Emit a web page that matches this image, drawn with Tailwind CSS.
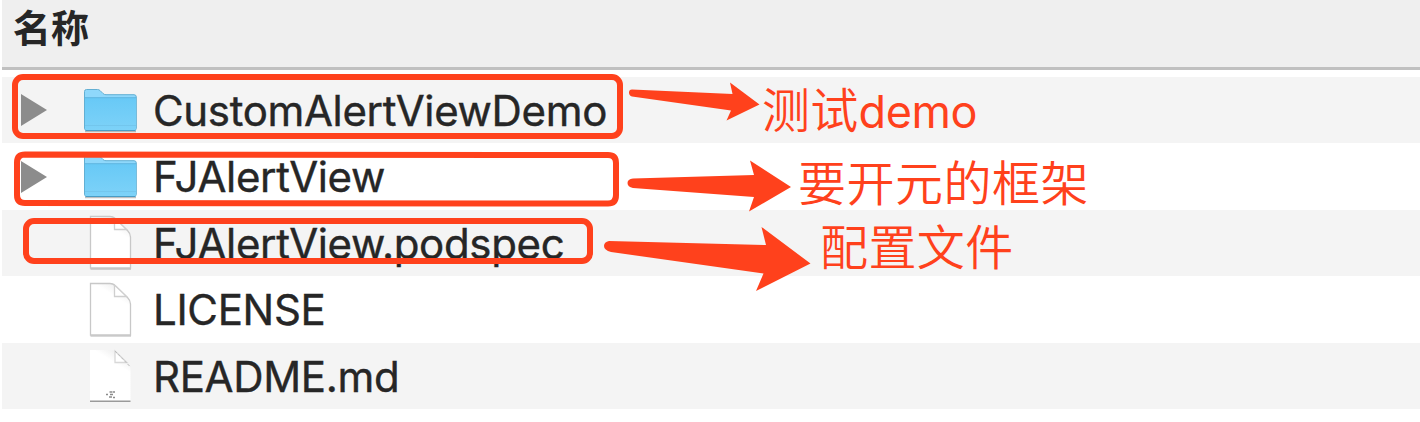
<!DOCTYPE html>
<html lang="zh">
<head>
<meta charset="utf-8">
<title>名称</title>
<script src="https://cdn.jsdelivr.net/npm/@tailwindcss/browser@4"></script>
</head>
<body class="bg-white">
<svg class="absolute h-0 w-0">
  <defs>
    <linearGradient id="fold" x1="0" y1="0" x2="0" y2="1"><stop offset="0" stop-color="#68c9f6"/><stop offset="1" stop-color="#7dd2f8"/></linearGradient>
    <linearGradient id="paper" x1="0.4" y1="0.6" x2="0.7" y2="0"><stop offset="0" stop-color="#fff"/><stop offset="0.6" stop-color="#fff"/><stop offset="1" stop-color="#ececec"/></linearGradient>
  </defs>
  <symbol id="folder" viewBox="0 0 56 46">
    <path d="M3 43.500H54" stroke="#000" stroke-opacity=".25" stroke-width="1.500"/>
    <path d="M2.500 40V3.500Q2.500 1.500 4.500 1.500H15.500Q17 1.500 18 2.500L21 5.500Q22 6.700 24 6.700H52Q54.300 6.700 54.300 9V40Q54.300 42.500 52 42.500H5Q2.500 42.500 2.500 40Z" fill="#8fd8fb" stroke="#62afd3" stroke-width="1"/>
    <path d="M3 10H54V40Q54 42 52 42H5Q3 42 3 40Z" fill="url(#fold)"/>
    <path d="M3 9.700H54" stroke="#5db4df" stroke-width="1"/>
    <path d="M3 37.500H54" stroke="#6fc0e6" stroke-width=".6"/>
    <path d="M3.500 42.500H53.500" stroke="#4a9cc4" stroke-width="1"/>
  </symbol>
  <symbol id="file" viewBox="0 0 46 56">
    <path d="M2.500 53.700H43" stroke="#000" stroke-opacity=".2" stroke-width="2"/>
    <path d="M2.500 1.500H22Q25 1.500 27 3.500L39.500 15.500Q42.500 18.500 42.500 22V53H2.500Z" fill="url(#paper)" stroke="#c8c8c8" stroke-width="1.300"/>
    <path d="M26.500 3V14.500H38.500Z" fill="#fff" stroke="#cfcfcf" stroke-width="1.300"/>
  </symbol>
  <symbol id="readme" viewBox="0 0 46 56">
    <path d="M2 2H23Q26 2 28 4L40.500 16Q42.500 18 42.500 21V53H2Z" fill="url(#paper)"/>
    <path d="M2 53.200H42.500" stroke="#9a9a9a" stroke-width="1.500"/>
    <path d="M27 3V14.500H39Z" fill="#fff" stroke="#d8d8d8" stroke-width="1.300"/>
    <path d="M27 3L42 18.500" stroke="#bbb" stroke-width="1" stroke-dasharray="3 1.500"/>
    <path d="M18 46.500h2M21.500 44h3M25 44h2M22 46.500h3M21 49h3M25 49.500h2" stroke="#8a8a8a" stroke-width="1.500"/>
  </symbol>
</svg>
<main class="relative h-[422px] w-[1420px] overflow-hidden pl-[2px] font-['Inter','Noto_Sans_CJK_SC',sans-serif] text-[#262626]">
  <header class="h-[70px] border-b-[3px] border-[#c0c0c0] bg-[#efefef] pl-[11px] font-['Noto_Sans_CJK_SC',sans-serif] text-[38px] leading-[51px] font-bold">名称</header>
  <div class="h-[7px]"></div>
  <ul class="text-[42px] leading-[66px] tracking-[-0.34px] whitespace-nowrap [-webkit-text-stroke:0.4px_#262626]">
    <li class="flex h-[66px] items-center bg-[#f4f4f4] pl-[19px]">
      <svg class="h-[32px] w-[26px]" viewBox="0 0 26 32"><path d="M0 0L26 16L0 32Z" fill="#8c8c8c"/></svg>
      <svg class="mt-px ml-[35px] h-[46px] w-[56px]"><use href="#folder"/></svg>
      <span class="pt-px pl-[15px]">CustomAlertViewDemo</span>
    </li>
    <li class="flex h-[67px] items-center bg-white pl-[19px]">
      <svg class="h-[32px] w-[26px]" viewBox="0 0 26 32"><path d="M0 0L26 16L0 32Z" fill="#8c8c8c"/></svg>
      <svg class="ml-[35px] h-[46px] w-[56px]"><use href="#folder"/></svg>
      <span class="pt-px pl-[15px]">FJAlertView</span>
    </li>
    <li class="flex h-[66px] items-center bg-[#f4f4f4] pl-[86px]">
      <svg class="h-[56px] w-[46px]"><use href="#file"/></svg>
      <span class="pt-px pl-[19px]">FJAlertView.podspec</span>
    </li>
    <li class="flex h-[67px] items-center bg-white pl-[86px]">
      <svg class="h-[56px] w-[46px]"><use href="#file"/></svg>
      <span class="pt-px pl-[19px]">LICENSE</span>
    </li>
    <li class="flex h-[66px] items-center bg-[#f4f4f4] pl-[86px]">
      <svg class="h-[56px] w-[46px]"><use href="#readme"/></svg>
      <span class="pt-px pl-[19px]">README.md</span>
    </li>
  </ul>
  <svg class="absolute top-0 left-0 h-[422px] w-[1420px]" viewBox="0 0 1420 422">
    <g fill="none" stroke="#ff411c" stroke-width="6">
      <rect x="15" y="77" width="605" height="59" rx="8"/>
      <path d="M25 154.500L608 155Q616 155 616 163V195Q616 203.500 608 203.500L25 203Q17 203 17 195V162.500Q17 154.500 25 154.500Z"/>
      <rect x="26" y="221" width="564" height="40" rx="8"/>
    </g>
    <g fill="#ff411c">
      <path d="M632 89.500L732.500 94L730 82.500L759.500 104.500L726.500 120.500L731 110.500L632 96.500Q629 95.500 629 92.500T632 89.500Z"/>
      <path d="M633 178.500L754 175L750 160.500L791 187L749 211.500L754 197L633 188Q627.500 187 627.500 183T633 178.500Z"/>
      <path d="M609 241L766 245L761.500 227L810.500 263.500L756 291L763.500 273.500L611 252Q604 250 604 246T609 241Z"/>
    </g>
  </svg>
  <div class="absolute top-[83px] left-[762px] font-['Noto_Sans_CJK_SC'] text-[48px] leading-[48px] font-[350] tracking-[0.3px] whitespace-nowrap text-[#ff411c]">测试<span class="font-['Inter'] text-[45px] font-normal tracking-[-0.4px]">demo</span></div>
  <div class="absolute top-[156px] left-[798px] font-['Noto_Sans_CJK_SC'] text-[48px] leading-[48px] font-[350] tracking-[0.5px] whitespace-nowrap text-[#ff411c]">要开元的框架</div>
  <div class="absolute top-[220px] left-[820px] font-['Noto_Sans_CJK_SC'] text-[48px] leading-[48px] font-[350] tracking-[0.4px] whitespace-nowrap text-[#ff411c]">配置文件</div>
</main>
</body>
</html>
